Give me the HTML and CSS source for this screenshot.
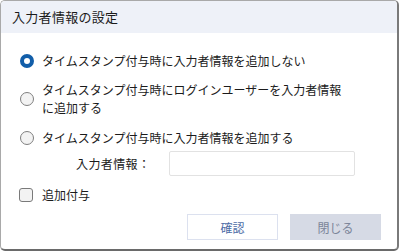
FILE: index.html
```html
<!DOCTYPE html>
<html lang="ja">
<head>
<meta charset="utf-8">
<link rel="stylesheet" href="styles.css">
</head>
<body>
<div class="dialog">
  <div class="header">入力者情報の設定</div>
  <div class="content">
    <div class="option">
      <span class="radio checked"></span>
      <span class="label">タイムスタンプ付与時に入力者情報を追加しない</span>
    </div>
    <div class="option two-line">
      <span class="radio"></span>
      <span class="label">タイムスタンプ付与時にログインユーザーを入力者情報<br>に追加する</span>
    </div>
    <div class="option">
      <span class="radio"></span>
      <span class="label">タイムスタンプ付与時に入力者情報を追加する</span>
    </div>
    <div class="field">
      <span class="field-label">入力者情報：</span>
      <span class="input"></span>
    </div>
    <div class="option check-row">
      <span class="checkbox"></span>
      <span class="label">追加付与</span>
    </div>
    <div class="buttons">
      <button class="btn primary">確認</button>
      <button class="btn secondary">閉じる</button>
    </div>
  </div>
</div>
</body>
</html>
```
FILE: styles.css
```css
html, body {
  margin: 0;
  padding: 0;
  background: #ffffff;
}
body {
  width: 400px;
  height: 252px;
  overflow: hidden;
  font-family: "Noto Sans CJK JP", "Noto Sans", sans-serif;
  color: #1b1b1b;
}
.dialog {
  box-sizing: border-box;
  width: 399px;
  height: 251px;
  border: 1px solid #a9a9a9;
  border-right: 2px solid #7a7a7a;
  border-bottom: 2px solid #6a6a6a;
  border-radius: 5px;
  overflow: hidden;
  background: #fff;
}
.header {
  height: 32px;
  line-height: 32px;
  background: #eef1f8;
  padding-left: 11px;
  font-size: 13px;
  letter-spacing: 0.3px;
}
.content {
  padding: 19px 0 0 18px;
  display: flex;
  flex-direction: column;
}
.option {
  display: flex;
  align-items: center;
  font-size: 12px;
  line-height: 18px;
  letter-spacing: 0;
  margin-bottom: 11px;
}
.option.two-line {
  margin-bottom: 12px;
}
.radio {
  box-sizing: border-box;
  flex: none;
  width: 14px;
  height: 14px;
  border-radius: 50%;
  border: 1px solid #7f7f7f;
  background: #f3f3f3;
  margin: 0 8px 0 1px;
}
.radio.checked {
  border: 4px solid #125ea9;
  background: #fff;
}
.field {
  display: flex;
  align-items: center;
  margin: -7px 0 10px 57px;
  font-size: 12px;
}
.field-label {
  width: 93px;
  letter-spacing: 0.4px;
}
.input {
  box-sizing: border-box;
  width: 186px;
  height: 25px;
  border: 1px solid #e2e2e2;
  border-radius: 2px;
}
.check-row {
  margin-bottom: 10px;
}
.checkbox {
  box-sizing: border-box;
  flex: none;
  width: 14px;
  height: 14px;
  border: 1px solid #7a7a7a;
  border-radius: 3px;
  background: #f3f3f3;
  margin: 0 9px 0 0;
}
.buttons {
  display: flex;
  justify-content: flex-end;
  gap: 12px;
  padding-right: 16px;
}
.btn {
  box-sizing: border-box;
  width: 91px;
  height: 26px;
  font-family: "Noto Sans CJK JP", "Noto Sans", sans-serif;
  font-size: 12px;
  border-radius: 0;
  padding: 0;
}
.btn.primary {
  background: #fff;
  border: 1px solid #dce1ef;
  color: #4d6ca6;
}
.btn.secondary {
  background: #d6dae5;
  border: 1px solid #d6dae5;
  color: #7c8599;
}
```
